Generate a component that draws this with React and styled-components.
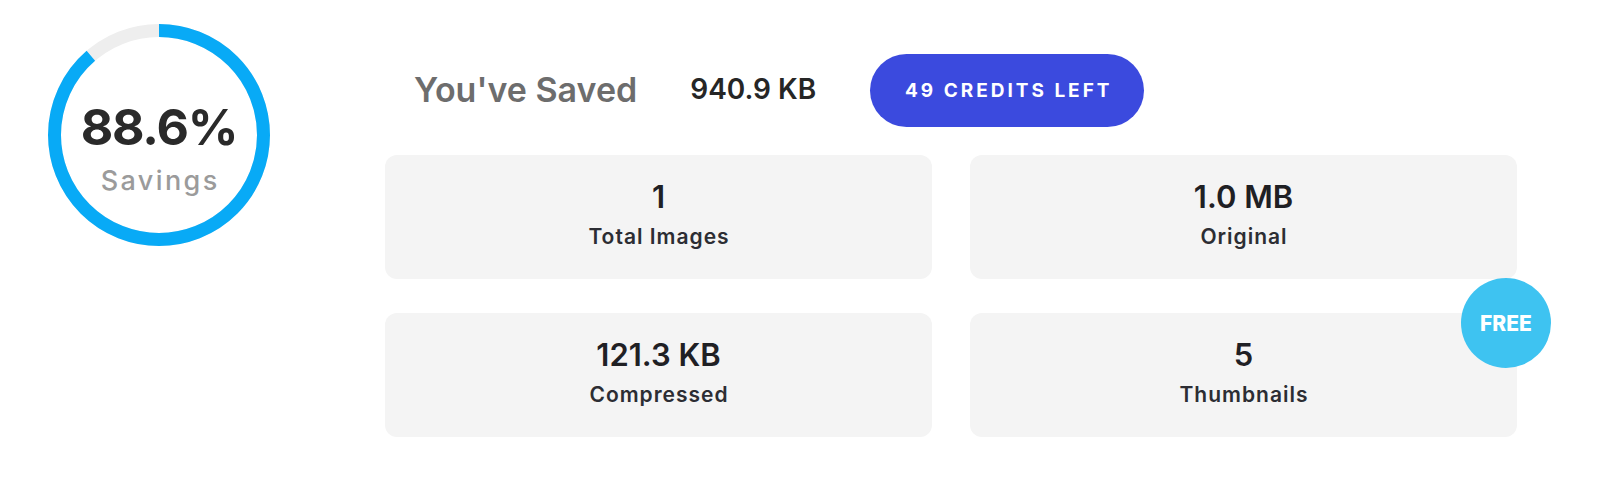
import styled, { createGlobalStyle } from "styled-components";

const GlobalStyle = createGlobalStyle`
    body {
        margin: 0;
        background: #ffffff;
        font-family: Inter, "Open Sans", sans-serif;
    }
`;

const Page = styled.main`
    display: flex;
    align-items: flex-start;
    padding: 24px 0 0 48px;
`;

const Gauge = styled.div`
    position: relative;
    width: 222px;
    height: 222px;
    flex-shrink: 0;
`;

const GaugeRing = styled.svg`
    display: block;
    transform: rotate(-90deg);
`;

const GaugeLabel = styled.div`
    position: absolute;
    inset: 0;
    display: flex;
    flex-direction: column;
    align-items: center;
    padding-top: 78px;
`;

const GaugeValue = styled.span`
    font-size: 50px;
    font-weight: 700;
    color: #2a2a2a;
    line-height: 1;
    letter-spacing: -1.2px;
`;

const GaugeCaption = styled.span`
    margin-top: 15px;
    font-size: 27px;
    font-weight: 500;
    color: #9b9b9b;
    line-height: 1;
    letter-spacing: 2.4px;
    margin-right: -2.4px;
`;

const Stats = styled.section`
    margin-left: 115px;
    display: flex;
    flex-direction: column;
    margin-top: 30px;
`;

const Header = styled.div`
    display: flex;
    align-items: center;
    height: 73px;
    padding-left: 29px;
`;

const SavedLabel = styled.span`
    font-size: 34px;
    font-weight: 600;
    color: #6d6d6d;
    padding-bottom: 2px;
`;

const SavedValue = styled.span`
    margin-left: 53px;
    font-size: 28px;
    font-weight: 600;
    color: #262626;
    padding-bottom: 4px;
`;

const CreditsButton = styled.button`
    margin-left: 54px;
    width: 274px;
    height: 73px;
    padding: 0 0 0 3px;
    border: none;
    border-radius: 37px;
    background: #3b4ade;
    color: #ffffff;
    font-family: inherit;
    font-size: 19px;
    font-weight: 700;
    letter-spacing: 3px;
    cursor: pointer;
`;

const Grid = styled.div`
    display: grid;
    grid-template-columns: 547px 547px;
    column-gap: 38px;
    row-gap: 34px;
    margin-top: 28px;
`;

const Card = styled.div`
    position: relative;
    height: 124px;
    box-sizing: border-box;
    padding-bottom: 6px;
    border-radius: 12px;
    background: #f4f4f4;
    display: flex;
    flex-direction: column;
    align-items: center;
    justify-content: center;
    gap: 14px;
`;

const CardValue = styled.span`
    font-size: 31px;
    font-weight: 600;
    color: #1f2024;
    line-height: 1;
`;

const CardLabel = styled.span`
    font-size: 21px;
    font-weight: 600;
    color: #2c2d33;
    line-height: 1;
    letter-spacing: 1px;
    margin-right: -1px;
`;

const FreeBadge = styled.span`
    position: absolute;
    top: -35px;
    right: -34px;
    width: 90px;
    height: 90px;
    border-radius: 50%;
    background: #3ec3f1;
    color: #ffffff;
    font-size: 21px;
    font-weight: 800;
    display: flex;
    align-items: center;
    justify-content: center;
`;

const stats = [
    { value: "1", label: "Total Images" },
    { value: "1.0 MB", label: "Original" },
    { value: "121.3 KB", label: "Compressed" },
    { value: "5", label: "Thumbnails", free: true },
];

function SavingsGauge({ percent }) {
    const r = 104.5;
    const circumference = 2 * Math.PI * r;
    const filled = (circumference * percent) / 100;

    return (
        <Gauge>
            <GaugeRing width="222" height="222" viewBox="0 0 222 222">
                <circle cx="111" cy="111" r={r} fill="none" stroke="#eeeeee" strokeWidth="13" />
                <circle
                    cx="111"
                    cy="111"
                    r={r}
                    fill="none"
                    stroke="#08aaf6"
                    strokeWidth="13"
                    strokeDasharray={`${filled} ${circumference}`}
                />
            </GaugeRing>
            <GaugeLabel>
                <GaugeValue>{percent}%</GaugeValue>
                <GaugeCaption>Savings</GaugeCaption>
            </GaugeLabel>
        </Gauge>
    );
}

function App() {
    return (
        <>
            <GlobalStyle />
            <Page>
                <SavingsGauge percent={88.6} />
                <Stats>
                    <Header>
                        <SavedLabel>You've Saved</SavedLabel>
                        <SavedValue>940.9 KB</SavedValue>
                        <CreditsButton>49 CREDITS LEFT</CreditsButton>
                    </Header>
                    <Grid>
                        {stats.map((s) => (
                            <Card key={s.label}>
                                <CardValue>{s.value}</CardValue>
                                <CardLabel>{s.label}</CardLabel>
                                {s.free && <FreeBadge>FREE</FreeBadge>}
                            </Card>
                        ))}
                    </Grid>
                </Stats>
            </Page>
        </>
    );
}

export default App;
